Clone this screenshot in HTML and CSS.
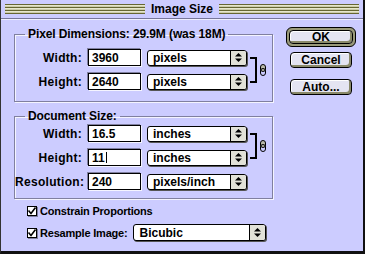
FILE: index.html
```html
<!DOCTYPE html>
<html>
  <head>
    <meta charset="utf-8">
    <title>Image Size</title>
    <link rel="stylesheet" href="styles.css">
  </head>
  <body>
    <div class="dialog">
      <div class="titlebar">
        <span class="stripes"></span>
        <span class="title">Image Size</span>
        <span class="stripes"></span>
      </div>

      <div class="content">
        <div class="main">
          <fieldset class="group pixel_group">
            <legend>Pixel Dimensions: 29.9M (was 18M)</legend>
            <div class="linked">
              <div class="rows">
                <div class="row">
                  <span class="label">Width:</span>
                  <div class="field">3960</div>
                  <div class="popup">pixels<span class="arrows"><svg width="7" height="9" viewBox="0 0 7 9"><polygon points="0,3.5 3.5,0 7,3.5"/><polygon points="0,5.5 3.5,9 7,5.5"/></svg></span></div>
                </div>
                <div class="row">
                  <span class="label">Height:</span>
                  <div class="field">2640</div>
                  <div class="popup">pixels<span class="arrows"><svg width="7" height="9" viewBox="0 0 7 9"><polygon points="0,3.5 3.5,0 7,3.5"/><polygon points="0,5.5 3.5,9 7,5.5"/></svg></span></div>
                </div>
              </div>
              <div class="link">
                <span class="bracket"></span>
                <svg class="chain" width="6" height="12" viewBox="0 0 6 12"><rect x="0.5" y="0.5" width="5" height="7" rx="2.5" fill="#bbbbaa" stroke="#000"/><rect x="0.5" y="4.5" width="5" height="7" rx="2.5" fill="none" stroke="#000"/></svg>
              </div>
            </div>
          </fieldset>

          <fieldset class="group doc_group">
            <legend>Document Size:</legend>
            <div class="linked">
              <div class="rows">
                <div class="row">
                  <span class="label">Width:</span>
                  <div class="field">16.5</div>
                  <div class="popup">inches<span class="arrows"><svg width="7" height="9" viewBox="0 0 7 9"><polygon points="0,3.5 3.5,0 7,3.5"/><polygon points="0,5.5 3.5,9 7,5.5"/></svg></span></div>
                </div>
                <div class="row">
                  <span class="label">Height:</span>
                  <div class="field">11<span class="caret"></span></div>
                  <div class="popup">inches<span class="arrows"><svg width="7" height="9" viewBox="0 0 7 9"><polygon points="0,3.5 3.5,0 7,3.5"/><polygon points="0,5.5 3.5,9 7,5.5"/></svg></span></div>
                </div>
              </div>
              <div class="link">
                <span class="bracket"></span>
                <svg class="chain" width="6" height="12" viewBox="0 0 6 12"><rect x="0.5" y="0.5" width="5" height="7" rx="2.5" fill="#bbbbaa" stroke="#000"/><rect x="0.5" y="4.5" width="5" height="7" rx="2.5" fill="none" stroke="#000"/></svg>
              </div>
            </div>
            <div class="row res_row">
              <span class="label">Resolution:</span>
              <div class="field">240</div>
              <div class="popup">pixels/inch<span class="arrows"><svg width="7" height="9" viewBox="0 0 7 9"><polygon points="0,3.5 3.5,0 7,3.5"/><polygon points="0,5.5 3.5,9 7,5.5"/></svg></span></div>
            </div>
          </fieldset>

          <div class="check_row constrain">
            <span class="checkbox"><svg width="10" height="10" viewBox="0 0 10 10"><path d="M1.5 4.5 L4 7.5 L8.5 1.5" fill="none" stroke="#000" stroke-width="1.6"/></svg></span>
            <span class="check_label">Constrain Proportions</span>
          </div>
          <div class="check_row resample">
            <span class="checkbox"><svg width="10" height="10" viewBox="0 0 10 10"><path d="M1.5 4.5 L4 7.5 L8.5 1.5" fill="none" stroke="#000" stroke-width="1.6"/></svg></span>
            <span class="check_label">Resample Image:</span>
            <div class="popup wide">Bicubic<span class="arrows"><svg width="7" height="9" viewBox="0 0 7 9"><polygon points="0,3.5 3.5,0 7,3.5"/><polygon points="0,5.5 3.5,9 7,5.5"/></svg></span></div>
          </div>
        </div>

        <div class="buttons">
          <div class="default_ring"><div class="btn">OK</div></div>
          <div class="btn cancel">Cancel</div>
          <div class="btn auto">Auto...</div>
        </div>
      </div>
    </div>
  </body>
</html>
```

FILE: styles.css
```css
body{
  margin: 0;
  font-family: "Liberation Sans", Arial, sans-serif;
  font-weight: bold;
  font-size: 12px;
  color: #000;
}
.dialog{
  box-sizing: border-box;
  width: 365px;
  height: 254px;
  background: #ccccff;
  border-left: 1px solid #333;
  border-right: 2px solid #111;
  border-bottom: 3px solid #111;
}
.titlebar{
  display: flex;
  align-items: center;
  height: 18px;
  padding: 0 4px;
  border-bottom: 1px solid #77779a;
  box-shadow: 0 1px 0 #eeeeff;
}
.stripes{
  flex: 1;
  height: 10px;
  background: repeating-linear-gradient(to bottom, #666633 0 1px, #e6e6cc 1px 2px, #ccccaa 2px 3px);
}
.title{
  padding: 0 6px;
  line-height: 14px;
}
.content{
  display: flex;
  padding-left: 13px;
}
.main{
  width: 259px;
  padding-top: 8px;
}
.group{
  margin: 0;
  padding: 0 0 11px 0;
  border: 1px solid #8080a0;
  box-shadow: inset 1px 1px 0 #f4f4ff, 1px 1px 0 #f4f4ff;
}
.group legend{
  margin-left: 10px;
  padding: 0 3px;
  line-height: 14px;
  letter-spacing: -0.1px;
}
.pixel_group .linked{
  padding-top: 8px;
}
.doc_group{
  margin-top: 7px;
  padding-bottom: 8px;
}
.doc_group .linked{
  padding-top: 2px;
}
.linked{
  display: flex;
}
.rows{
  display: flex;
  flex-direction: column;
  gap: 7px;
}
.row{
  display: flex;
  align-items: center;
  height: 17px;
}
.res_row{
  margin-top: 7px;
}
.label{
  width: 67px;
  text-align: right;
  letter-spacing: 0.3px;
}
.field{
  box-sizing: border-box;
  display: flex;
  align-items: center;
  width: 53px;
  height: 17px;
  margin-left: 6px;
  padding-left: 3px;
  background: #fff;
  border: 1px solid #000;
  box-shadow: 1px 1px 0 #f4f4ff, -1px -1px 0 #8080a0;
}
.caret{
  display: inline-block;
  width: 0;
  height: 11px;
  margin-left: 1px;
  border-left: 1px solid #000;
}
.popup{
  box-sizing: border-box;
  display: flex;
  align-items: center;
  flex-shrink: 0;
  width: 100px;
  height: 16px;
  margin-left: 6px;
  padding-left: 5px;
  background: #fff;
  border: 1px solid #000;
  border-radius: 3px;
  box-shadow: 1px 1px 0 #555;
}
.arrows{
  display: flex;
  align-items: center;
  justify-content: center;
  margin-left: auto;
  width: 15px;
  height: 100%;
  background: #e2e2d8;
  border-left: 1px solid #000;
  border-radius: 0 2px 2px 0;
}
.link{
  display: flex;
  align-items: center;
  align-self: flex-start;
  margin-top: 8px;
  margin-left: 3px;
}
.bracket{
  width: 5px;
  height: 22px;
  border: 2px solid #000;
  border-left: none;
}
.chain{
  margin-left: 3px;
}
.check_row{
  display: flex;
  align-items: center;
  gap: 3px;
  padding-left: 13px;
}
.check_label{
  white-space: nowrap;
  font-size: 11px;
  letter-spacing: -0.2px;
}
.constrain{
  margin-top: 7px;
  height: 10px;
}
.resample{
  margin-top: 8px;
  height: 17px;
}
.checkbox{
  display: flex;
  flex-shrink: 0;
  width: 10px;
  height: 10px;
  box-sizing: border-box;
  border: 1px solid #000;
  background: #fff;
  box-shadow: 1px 1px 0 #8080a0;
}
.checkbox svg{
  margin: -1px;
}
.popup.wide{
  width: 133px;
  height: 17px;
  margin-left: 3px;
}
.buttons{
  display: flex;
  flex-direction: column;
  align-items: center;
  width: 72px;
  margin-left: 12px;
  padding-top: 8px;
}
.default_ring{
  padding: 2px;
  border: 1px solid #000;
  border-radius: 6px;
  background: #9a9a7a;
}
.btn{
  box-sizing: border-box;
  display: flex;
  align-items: center;
  justify-content: center;
  width: 62px;
  height: 16px;
  border: 1px solid #000;
  border-radius: 4px;
  background: #e4e4f2;
  box-shadow: inset -2px -2px 0 #8a8a6a, inset 1px 1px 0 #fff;
}
.default_ring .btn{
  width: 64px;
  height: 14px;
}
.cancel{
  margin-top: 5px;
}
.auto{
  margin-top: 11px;
}
```
